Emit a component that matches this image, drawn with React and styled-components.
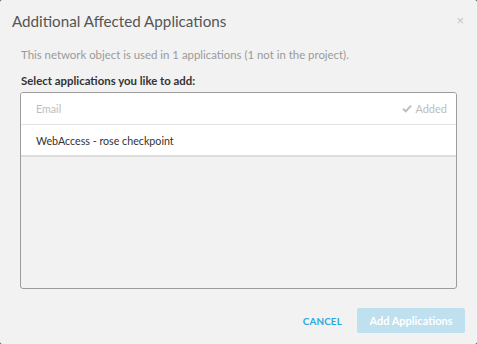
import React from "react";
import styled, { createGlobalStyle } from "styled-components";

const Global = createGlobalStyle`
  html, body { margin: 0; padding: 0; background: #3a3a3a; }
  body { font-family: Lato, "Open Sans", sans-serif; }
  * { box-sizing: border-box; }
`;

const Dialog = styled.div`
  width: 477px;
  height: 344px;
  background: #f2f2f2;
  border-radius: 2px;
  display: flex;
  flex-direction: column;
`;

const Header = styled.div`
  display: flex;
  align-items: center;
  justify-content: space-between;
  padding: 1px 13px 0 12px;
  height: 40px;
`;

const Title = styled.h1`
  margin: 0;
  font-size: 15.2px;
  font-weight: 400;
  color: #555;
  line-height: 20px;
`;

const Close = styled.button`
  border: 0;
  background: none;
  padding: 0;
  font-size: 13px;
  line-height: 1;
  color: #c4c4c4;
  cursor: pointer;
`;

const Body = styled.div`
  display: flex;
  flex-direction: column;
  padding: 7px 20px 0 20px;
`;

const Description = styled.p`
  margin: 0 0 0 1px;
  font-size: 11.4px;
  color: #9a9a9a;
  line-height: 16px;
`;

const Label = styled.div`
  margin: 10px 0 3px 1px;
  font-size: 11.4px;
  font-weight: 700;
  color: #333;
  line-height: 16px;
`;

const List = styled.div`
  height: 197px;
  border: 1px solid #9c9c9c;
  border-radius: 3px;
  overflow: hidden;
  background: #f2f2f2;
`;

const Row = styled.div`
  display: flex;
  align-items: center;
  justify-content: space-between;
  height: 32px;
  padding: 0 9px 0 15px;
  background: #fff;
  border-bottom: ${(p) => (p.last ? "2px solid #dcdcdc" : "1px solid #e2e2e2")};
  font-size: 10.7px;
  color: ${(p) => (p.muted ? "#bdbdbd" : "#333")};
`;

const Status = styled.span`
  display: inline-flex;
  align-items: center;
  gap: 3px;
  color: #bdbdbd;
  font-size: 11px;
`;

const Footer = styled.div`
  display: flex;
  justify-content: flex-end;
  align-items: center;
  gap: 15px;
  margin-top: 19px;
  padding: 0 12px 0 0;
  height: 25px;
`;

const LinkButton = styled.button`
  border: 0;
  background: none;
  padding: 0;
  font-family: inherit;
  font-size: 9.8px;
  font-weight: 700;
  color: #2aa9e1;
  letter-spacing: 0.2px;
  cursor: pointer;
`;

const PrimaryButton = styled.button`
  border: 0;
  border-radius: 2px;
  background: #bee0ef;
  color: #fff;
  font-family: inherit;
  font-size: 11px;
  font-weight: 700;
  height: 25px;
  width: 108px;
  padding: 0;
`;

const Check = () => (
  <svg width="10" height="9" viewBox="0 0 10 9">
    <path d="M1 4.8 L3.8 7.4 L9 1.6" fill="none" stroke="#bdbdbd" strokeWidth="2" />
  </svg>
);

export default function App() {
  return (
    <>
      <Global />
      <Dialog>
        <Header>
          <Title>Additional Affected Applications</Title>
          <Close aria-label="close">×</Close>
        </Header>
        <Body>
          <Description>This network object is used in 1 applications (1 not in the project).</Description>
          <Label>Select applications you like to add:</Label>
          <List>
            <Row muted>
              <span>Email</span>
              <Status><Check />Added</Status>
            </Row>
            <Row last>
              <span>WebAccess - rose checkpoint</span>
            </Row>
          </List>
        </Body>
        <Footer>
          <LinkButton>CANCEL</LinkButton>
          <PrimaryButton disabled>Add Applications</PrimaryButton>
        </Footer>
      </Dialog>
    </>
  );
}
